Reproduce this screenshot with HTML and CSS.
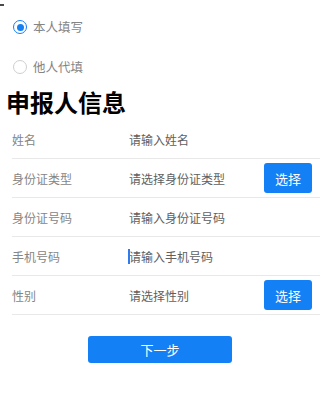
FILE: index.html
```html
<!DOCTYPE html>
<html lang="zh">
<head>
<meta charset="utf-8">
<meta name="viewport" content="width=device-width, initial-scale=1">
<link rel="stylesheet" href="styles.css">
<title>申报人信息</title>
</head>
<body>
<div class="mark"></div>
<div class="radios">
  <label class="radio-item">
    <span class="radio checked"></span>
    <span class="radio-text">本人填写</span>
  </label>
  <label class="radio-item">
    <span class="radio"></span>
    <span class="radio-text">他人代填</span>
  </label>
</div>
<h1 class="title">申报人信息</h1>
<div class="form">
  <div class="row">
    <div class="label">姓名</div>
    <div class="value">请输入姓名</div>
  </div>
  <div class="row">
    <div class="label">身份证类型</div>
    <div class="value">请选择身份证类型</div>
    <div class="pick">选择</div>
  </div>
  <div class="row">
    <div class="label">身份证号码</div>
    <div class="value">请输入身份证号码</div>
  </div>
  <div class="row">
    <div class="label">手机号码</div>
    <div class="value focused"><span class="caret"></span>请输入手机号码</div>
  </div>
  <div class="row">
    <div class="label">性别</div>
    <div class="value">请选择性别</div>
    <div class="pick">选择</div>
  </div>
</div>
<div class="actions">
  <div class="next">下一步</div>
</div>
</body>
</html>
```
FILE: styles.css
```css
html, body {
  margin: 0;
  padding: 0;
  background: #ffffff;
}
body {
  width: 320px;
  font-family: "Noto Sans CJK SC", "Noto Sans", sans-serif;
  color: #333;
}
.mark {
  width: 4px;
  height: 2px;
  margin-top: 4px;
  background: #4a4a4a;
}
.radios {
  display: flex;
  flex-direction: column;
  margin-top: 1px;
}
.radio-item {
  display: flex;
  align-items: center;
  height: 40px;
  padding-left: 13px;
  gap: 6px;
}
.radio {
  box-sizing: border-box;
  width: 14px;
  height: 14px;
  border-radius: 50%;
  border: 1px solid #cfcfcf;
  display: flex;
  align-items: center;
  justify-content: center;
}
.radio.checked {
  border: 1.5px solid #1480f6;
}
.radio.checked::after {
  content: "";
  width: 7px;
  height: 7px;
  border-radius: 50%;
  background: #1480f6;
}
.radio-text {
  font-size: 12.5px;
  color: #858585;
  line-height: 18px;
}
.title {
  margin: 0;
  padding-left: 6px;
  font-size: 24px;
  line-height: 30px;
  font-weight: 700;
  color: #000;
}
.form {
  margin-top: 3px;
  margin-left: 12px;
}
.row {
  display: flex;
  align-items: center;
  height: 38px;
  border-bottom: 1px solid #e8e8e8;
  padding-right: 8px;
}
.label {
  width: 117px;
  font-size: 12px;
  color: #858585;
}
.value {
  flex: 1;
  font-size: 12px;
  color: #606060;
  position: relative;
}
.caret {
  position: absolute;
  left: -1px;
  top: 1px;
  width: 1.5px;
  height: 15px;
  background: #2f7cf0;
}
.pick {
  width: 48px;
  height: 30px;
  border-radius: 3px;
  background: #1480f6;
  color: #fff;
  font-size: 13px;
  display: flex;
  align-items: center;
  justify-content: center;
}
.actions {
  display: flex;
  justify-content: center;
  margin-top: 21px;
}
.next {
  width: 144px;
  height: 27px;
  border-radius: 3px;
  background: #1480f6;
  color: #fff;
  font-size: 13px;
  display: flex;
  align-items: center;
  justify-content: center;
}
```
